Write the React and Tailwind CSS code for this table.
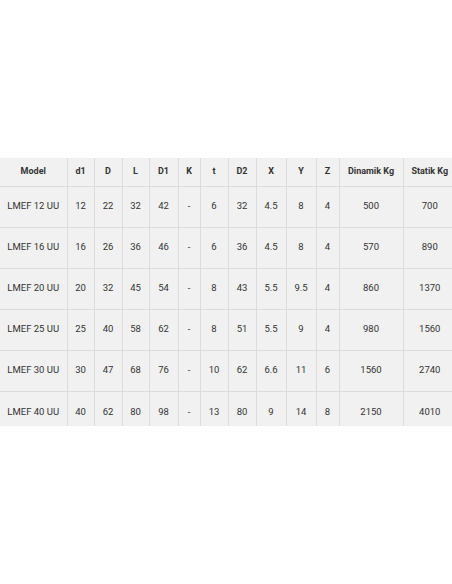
import React from "react";

const cols = [67, 27, 28, 27, 29, 22, 28, 28, 30, 30, 23, 64, 53];
const head = ["Model", "d1", "D", "L", "D1", "K", "t", "D2", "X", "Y", "Z", "Dinamik Kg", "Statik Kg"];
const rows = [
  ["LMEF 12 UU", "12", "22", "32", "42", "-", "6", "32", "4.5", "8", "4", "500", "700"],
  ["LMEF 16 UU", "16", "26", "36", "46", "-", "6", "36", "4.5", "8", "4", "570", "890"],
  ["LMEF 20 UU", "20", "32", "45", "54", "-", "8", "43", "5.5", "9.5", "4", "860", "1370"],
  ["LMEF 25 UU", "25", "40", "58", "62", "-", "8", "51", "5.5", "9", "4", "980", "1560"],
  ["LMEF 30 UU", "30", "47", "68", "76", "-", "10", "62", "6.6", "11", "6", "1560", "2740"],
  ["LMEF 40 UU", "40", "62", "80", "98", "-", "13", "80", "9", "14", "8", "2150", "4010"],
];

export default function App() {
  return (
    <div className="w-[452px] h-[584px] bg-white pt-[158px]" style={{ fontFamily: "Roboto, 'Liberation Sans', sans-serif" }}>
      <div className="w-[452px] h-[268px] overflow-hidden bg-[#f1f1f1]">
        <table className="table-fixed border-collapse w-[456px] text-[#333] text-[9.5px]">
          <colgroup>
            {cols.map((w, i) => (
              <col key={i} style={{ width: w }} />
            ))}
          </colgroup>
          <thead>
            <tr className="h-[28px]">
              {head.map((h, i) => (
                <th key={i} className={`font-bold text-[9px] text-center p-0 border-[#dcdcdc] border-b ${i < head.length - 1 ? "border-r" : ""}`}>
                  {h}
                </th>
              ))}
            </tr>
          </thead>
          <tbody>
            {rows.map((r, ri) => (
              <tr key={ri} className="h-[41px]">
                {r.map((c, i) => (
                  <td key={i} className={`text-center p-0 border-[#dcdcdc] ${ri < rows.length - 1 ? "border-b" : ""} ${i < r.length - 1 ? "border-r" : ""}`}>
                    {c}
                  </td>
                ))}
              </tr>
            ))}
          </tbody>
        </table>
      </div>
    </div>
  );
}
